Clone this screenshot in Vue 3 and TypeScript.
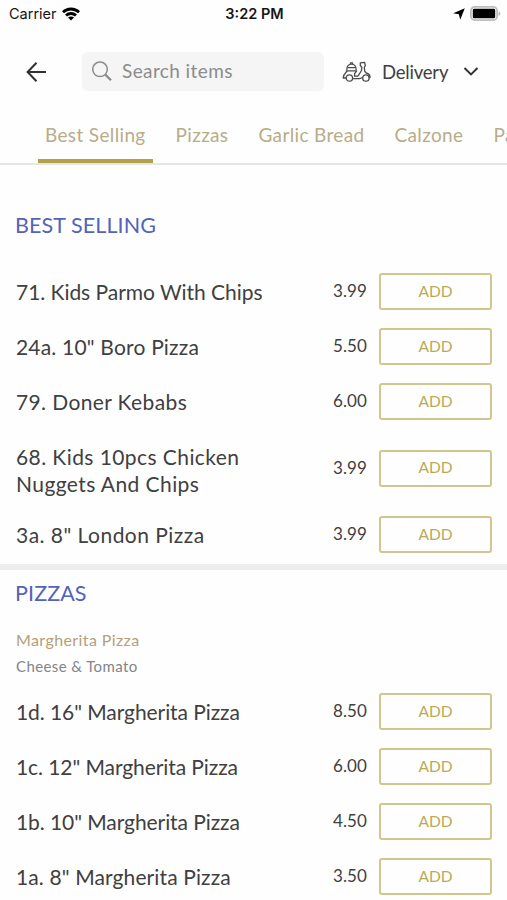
<script setup lang="ts">
import { ref } from 'vue'

interface Item {
  name: string
  price: string
  spacing: number
}

interface Section {
  title: string
  group?: string
  note?: string
  items: Item[]
}

const tabs: string[] = ['Best Selling', 'Pizzas', 'Garlic Bread', 'Calzone', 'Pa']
const activeTab = ref(0)

const sections: Section[] = [
  {
    title: 'BEST SELLING',
    items: [
      { name: '71. Kids Parmo With Chips', price: '3.99', spacing: -0.04 },
      { name: '24a. 10" Boro Pizza', price: '5.50', spacing: 0.19 },
      { name: '79. Doner Kebabs', price: '6.00', spacing: 0.38 },
      { name: '68. Kids 10pcs Chicken Nuggets And Chips', price: '3.99', spacing: 0.42 },
      { name: '3a. 8" London Pizza', price: '3.99', spacing: 0.47 },
    ],
  },
  {
    title: 'PIZZAS',
    group: 'Margherita Pizza',
    note: 'Cheese & Tomato',
    items: [
      { name: '1d. 16" Margherita Pizza', price: '8.50', spacing: -0.07 },
      { name: '1c. 12" Margherita Pizza', price: '6.00', spacing: -0.08 },
      { name: '1b. 10" Margherita Pizza', price: '4.50', spacing: -0.07 },
      { name: '1a. 8" Margherita Pizza', price: '3.50', spacing: 0.12 },
    ],
  },
]
</script>

<template>
  <div class="screen">
    <div class="status">
      <div class="status-left">
        <span>Carrier</span>
        <svg class="wifi" viewBox="0 0 18 14" width="18" height="14">
          <g fill="none" stroke="#000" stroke-width="2.8">
            <path d="M1 5.2C5.4.9 12.600.9 17 5.200" />
            <path d="M4 8.500C6.800 5.800 11.200 5.800 14 8.500" />
          </g>
          <path d="M9 13.600L6 10.600C7.700 9.100 10.300 9.100 12 10.600Z" />
        </svg>
      </div>
      <div class="clock">3:22 PM</div>
      <div class="status-right">
        <svg viewBox="0 0 12 12" width="12" height="12"><path d="M11.800.2L7.200 11.800L5.900 6.300L.2 5.200Z" /></svg>
        <svg viewBox="0 0 31 15" width="31" height="15">
          <rect x=".9" y=".9" width="26.200" height="13.200" rx="3.800" fill="#fff" stroke="#bdbdbd" stroke-width="1.800" />
          <rect x="2.800" y="2.700" width="22.400" height="9.600" rx="1.400" />
          <path d="M28.600 5.200C30.800 6 30.800 9 28.600 9.800Z" fill="#b5b5b5" />
        </svg>
      </div>
    </div>

    <header class="bar">
      <svg class="back" viewBox="0 0 22 22" width="22" height="22">
        <path d="M21 11H3M11.500 1.800L2.600 11L11.500 20.200" fill="none" stroke="#303030" stroke-width="2" />
      </svg>
      <div class="search">
        <svg viewBox="0 0 22 22" width="22" height="22" fill="none" stroke="#8c8c8c">
          <circle cx="9" cy="8.300" r="7.300" stroke-width="1.500" />
          <path d="M14.300 13.600L20 19.300" stroke-width="2.300" />
        </svg>
        <span>Search items</span>
      </div>
      <div class="mode">
        <svg class="scooter" viewBox="0 0 29 22" width="29" height="22" fill="none" stroke="#4c4c4c" stroke-width="1.300" stroke-linejoin="round">
          <path d="M4.800 9.200C4.800 5.200 6.600 3.200 9.500 3.200S14.200 5.200 14.200 9.200" />
          <path d="M5.600 6.700H13.500M8.500 3V1.800H10.500V3" />
          <path d="M3.800 9.800H14.700L12.600 12.600V15.200H16M5.200 9.900C4.800 11.300 1.400 12.500 1.200 17H4" />
          <circle cx="7.400" cy="17" r="3.200" />
          <path d="M10.600 17.600H17.500L20.800 16.500" />
          <path d="M16 15.200L19.500 9.500L19.800 6.200L18.300 4.500V1.800L22.600 1.300L23.300 4.500L22.300 6.500L22.700 10.200L24.300 12C26.800 12.600 28.200 14.300 28 16.600L26.500 15.500" />
          <circle cx="23.900" cy="17" r="3.200" />
        </svg>
        <span>Delivery</span>
        <svg viewBox="0 0 16 10" width="16" height="10">
          <path d="M1.500 1L8 7.500L14.500 1" fill="none" stroke="#303030" stroke-width="1.900" />
        </svg>
      </div>
    </header>

    <nav class="tabs">
      <button
        v-for="(tab, i) in tabs"
        :key="tab"
        class="tab"
        :class="{ active: i === activeTab }"
        @click="activeTab = i"
      >{{ tab }}</button>
    </nav>

    <section v-for="section in sections" :key="section.title" class="section">
      <h2>{{ section.title }}</h2>
      <div v-if="section.group" class="group">
        <h3>{{ section.group }}</h3>
        <p>{{ section.note }}</p>
      </div>
      <div v-for="item in section.items" :key="item.name" class="row">
        <div class="name" :style="{ letterSpacing: item.spacing + 'px' }">{{ item.name }}</div>
        <div class="price">{{ item.price }}</div>
        <button class="add">ADD</button>
      </div>
    </section>
  </div>
</template>

<style>
body {
  margin: 0;
  background: #fff;
}
</style>

<style scoped>
.screen {
  width: 507px;
  height: 900px;
  overflow: hidden;
  background: #fefefe;
  color: #404040;
  font-family: Lato, "Open Sans", sans-serif;
  display: flex;
  flex-direction: column;
}
.screen > * {
  flex-shrink: 0;
}
button {
  font: inherit;
  background: none;
  border: 0;
  padding: 0;
}
.status {
  height: 27px;
  box-sizing: border-box;
  padding: 0 7px 0 9px;
  display: grid;
  grid-template-columns: 1fr auto 1fr;
  align-items: center;
  font-family: Inter, sans-serif;
  font-size: 14.500px;
  color: #151515;
}
.status-left,
.status-right {
  display: flex;
  align-items: center;
  gap: 5px;
}
.status-right {
  justify-content: flex-end;
  margin-right: -1px;
}
.clock {
  font-weight: 600;
  font-size: 14.500px;
}
.bar {
  height: 91px;
  box-sizing: border-box;
  padding: 25px 28px 27px 25px;
  display: flex;
  align-items: center;
}
.search {
  margin-left: 35px;
  width: 242px;
  height: 39px;
  box-sizing: border-box;
  padding-left: 9px;
  border-radius: 6px;
  background: #f5f5f5;
  display: flex;
  align-items: center;
  gap: 9px;
  color: #8c8c8c;
  font-size: 19px;
  letter-spacing: 0.400px;
}
.search span {
  padding-bottom: 2px;
}
.mode {
  flex: 1;
  margin-left: 18px;
  display: flex;
  align-items: center;
  font-size: 18.500px;
  letter-spacing: -0.200px;
}
.mode span {
  margin-left: 11px;
  flex: 1;
}
.tabs {
  height: 45px;
  display: flex;
  padding-left: 38px;
  gap: 16px;
  border-bottom: 2px solid #e6e6e6;
  overflow: hidden;
}
.tab {
  padding: 2px 7px 9px;
  border-bottom: 4px solid transparent;
  height: 45px;
  box-sizing: border-box;
  font-size: 19px;
  line-height: 30px;
  letter-spacing: 0.350px;
  color: #b9ac87;
  white-space: nowrap;
}
.tab.active {
  border-bottom-color: #b3a149;
}
.section {
  padding: 0 15px 0 16px;
}
.section + .section {
  border-top: 6px solid #ededed;
  margin-top: 2px;
}
h2 {
  margin: 0 0 0 -1px;
  padding: 47px 0 25px;
  font-size: 21.500px;
  line-height: 27px;
  font-weight: 400;
  letter-spacing: 0.100px;
  color: #5363b8;
}
.section + .section h2 {
  padding: 10px 0 19px;
}
.group {
  height: 58px;
}
h3,
p {
  margin: 0;
  font-weight: 400;
  font-size: 16px;
  line-height: 28px;
  color: #b5a077;
  letter-spacing: 0.400px;
}
p {
  font-size: 15px;
  line-height: 24px;
  color: #858585;
}
.row {
  min-height: 55px;
  display: flex;
  align-items: center;
}
.name {
  align-self: flex-start;
  width: 270px;
  box-sizing: border-box;
  padding: 14px 0 10px;
  font-size: 21px;
  line-height: 27px;
}
.price {
  flex: 1;
  text-align: right;
  font-size: 17px;
  letter-spacing: 0.100px;
  margin-right: 12px;
  padding-bottom: 2px;
}
.add {
  width: 113px;
  height: 37px;
  box-sizing: border-box;
  padding-bottom: 2px;
  border: 2px solid #d1c68d;
  border-radius: 3px;
  font-size: 15.500px;
  color: #b9aa55;
}
</style>
